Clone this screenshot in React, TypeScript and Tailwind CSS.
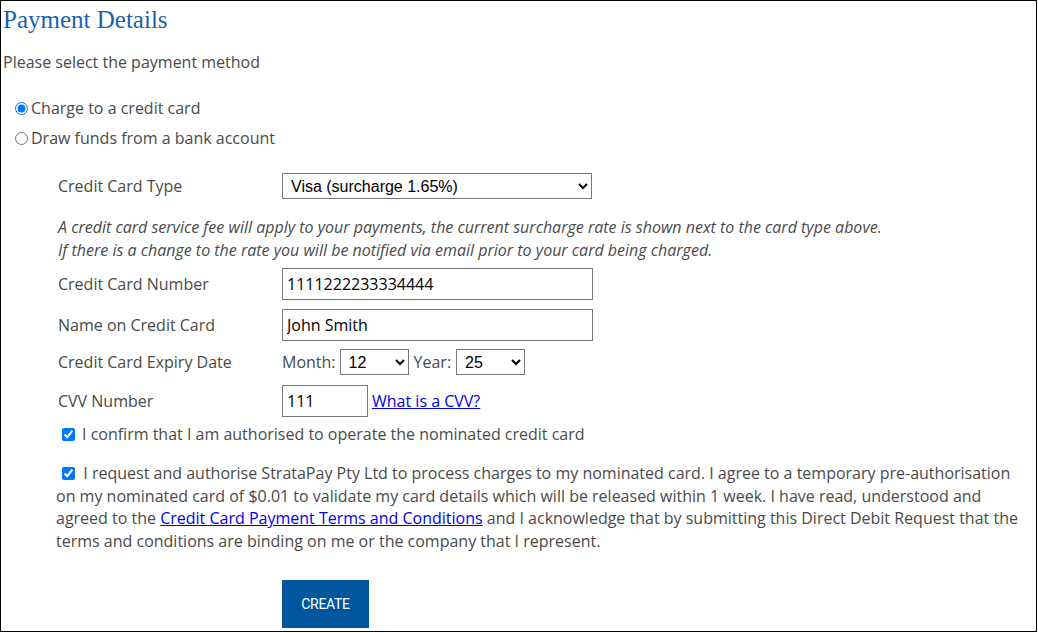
import React from 'react';

const labelCls = 'w-[224px] shrink-0';
const inputCls =
  'border border-[#767676] h-[32px] px-[4px] text-[16px] text-black bg-white outline-none';
const selectCls =
  'border border-[#767676] h-[26px] pl-[4px] text-[16px] text-black bg-white font-["Liberation_Sans",Arial,sans-serif]';

export default function App() {
  return (
    <div className="w-[1038px] h-[633px] bg-white overflow-hidden">
      <div className="w-[1037px] h-[632px] border border-black pl-[2px] pr-[14px] font-['Open_Sans',sans-serif] text-[16px] text-[#4a4a4a]">
        {/* 标题 */}
        <h1 className="mt-[5px] text-[25px] leading-[28px] font-['Liberation_Serif',serif] text-[#1b5fae]">
          Payment Details
        </h1>
        <p className="mt-[16px] leading-[24px]">Please select the payment method</p>

        <div className="mt-[22px] pl-[9px] space-y-[6px]">
          <label className="flex items-center leading-[24px]">
            <input type="radio" name="method" defaultChecked className="w-[13px] h-[13px] m-[3px]" />
            Charge to a credit card
          </label>
          <label className="flex items-center leading-[24px]">
            <input type="radio" name="method" className="w-[13px] h-[13px] m-[3px]" />
            Draw funds from a bank account
          </label>
        </div>

        {/* 信用卡表单 */}
        <div className="pl-[55px] mt-[23px]">
          <div className="flex items-center h-[26px]">
            <span className={labelCls}>Credit Card Type</span>
            <select defaultValue="visa" className={`${selectCls} w-[310px]`}>
              <option value="visa">Visa (surcharge 1.65%)</option>
              <option value="mc">MasterCard (surcharge 1.65%)</option>
            </select>
          </div>

          <p className="mt-[17px] italic leading-[23px]">
            A credit card service fee will apply to your payments, the current surcharge rate is shown next to the card type above.
            <br />
            If there is a change to the rate you will be notified via email prior to your card being charged.
          </p>

          <div className="flex items-center mt-[6px]">
            <span className={labelCls}>Credit Card Number</span>
            <input readOnly value="1111222233334444" className={`${inputCls} w-[311px]`} />
          </div>
          <div className="flex items-center mt-[9px]">
            <span className={labelCls}>Name on Credit Card</span>
            <input readOnly value="John Smith" className={`${inputCls} w-[311px]`} />
          </div>
          <div className="flex items-center mt-[8px]">
            <span className={labelCls}>Credit Card Expiry Date</span>
            <span>Month:</span>
            <select defaultValue="12" className={`${selectCls} w-[69px] ml-[4px]`}>
              {Array.from({ length: 12 }, (_, i) => (
                <option key={i} value={String(i + 1)}>
                  {i + 1}
                </option>
              ))}
            </select>
            <span className="ml-[5px]">Year:</span>
            <select defaultValue="25" className={`${selectCls} w-[69px] ml-[5px]`}>
              {['24', '25', '26', '27', '28', '29', '30'].map((y) => (
                <option key={y} value={y}>
                  {y}
                </option>
              ))}
            </select>
          </div>
          <div className="flex items-center mt-[10px]">
            <span className={labelCls}>CVV Number</span>
            <input readOnly value="111" className={`${inputCls} w-[86px]`} />
            <a href="#" className="ml-[4px] text-[#0000ee] underline">
              What is a CVV?
            </a>
          </div>

          <label className="flex items-center mt-[6px] leading-[22px]">
            <input type="checkbox" defaultChecked className="w-[13px] h-[13px] ml-[4px] mr-[7px] accent-[#0075ff]" />
            I confirm that I am authorised to operate the nominated credit card
          </label>

          <p className="mt-[17px] leading-[22.6px] -ml-[2px]">
            &nbsp;
            <input type="checkbox" defaultChecked className="w-[13px] h-[13px] ml-[2px] mr-[4px] align-[-1px] accent-[#0075ff]" />
            &nbsp;I request and authorise StrataPay Pty Ltd to process charges to my nominated card. I agree to a temporary pre-authorisation on my nominated card of $0.01 to validate my card details which will be released within 1 week. I have read, understood and agreed to the{' '}
            <a href="#" className="text-[#0000ee] underline">
              Credit Card Payment Terms and Conditions
            </a>{' '}
            and I acknowledge that by submitting this Direct Debit Request that the terms and conditions are binding on me or the company that I represent.
          </p>

          <button className="mt-[28px] ml-[224px] w-[87px] h-[48px] bg-[#00579e] text-white text-[14px] font-['Roboto',sans-serif] tracking-[-0.3px]">
            CREATE
          </button>
        </div>
      </div>
    </div>
  );
}
